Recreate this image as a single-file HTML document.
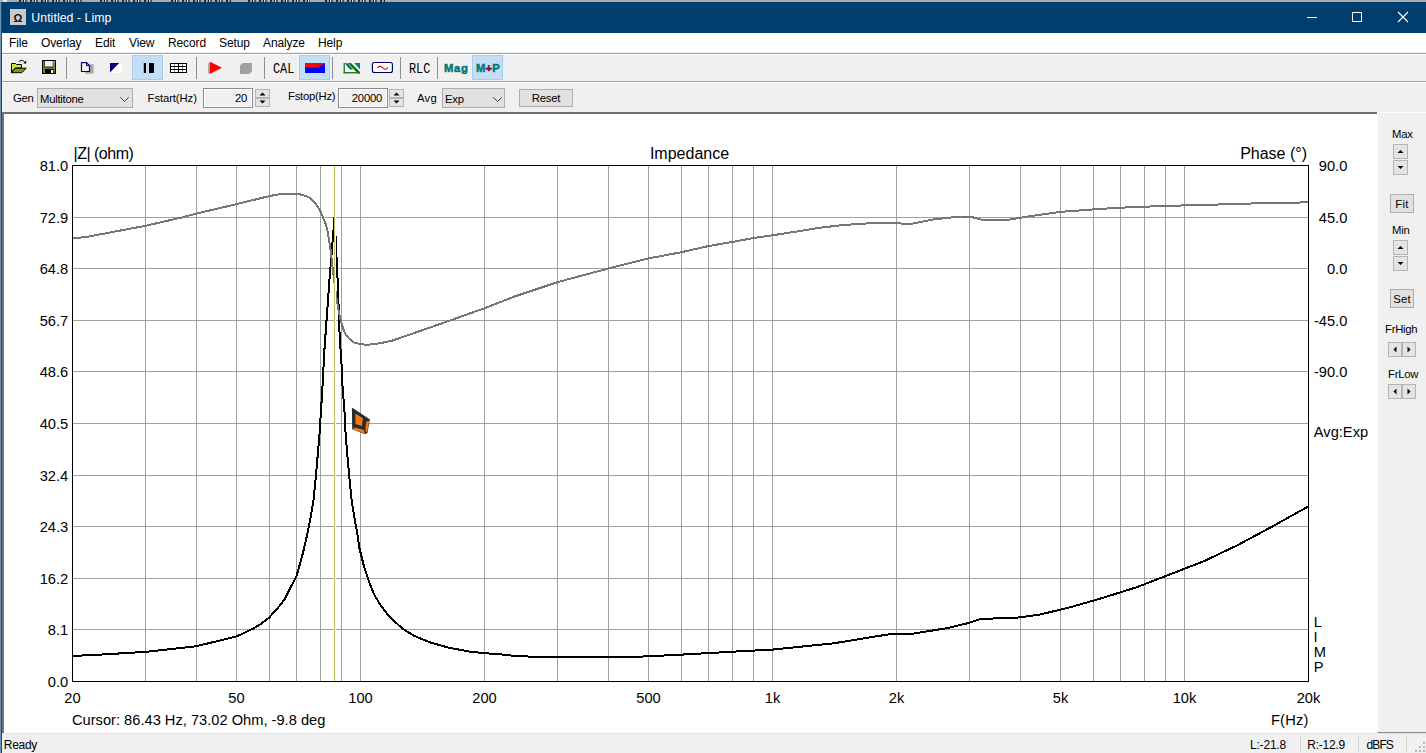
<!DOCTYPE html>
<html lang="en">
<head>
<meta charset="utf-8">
<title>Untitled - Limp</title>
<style>
html,body{margin:0;padding:0;}
body{width:1426px;height:753px;overflow:hidden;background:#fff;position:relative;font-family:"Liberation Sans",Arial,sans-serif;font-size:12px;color:#000;}
.abs{position:absolute;}
#topstrip{left:0;top:0;width:1426px;height:2px;background:#ababab;overflow:hidden;}
#topstrip i{position:absolute;top:0;height:2px;background:repeating-linear-gradient(90deg,#2a2a2a 0,#2a2a2a 2px,#9a9a9a 2px,#9a9a9a 4px,#1e1e1e 4px,#1e1e1e 5px,#dcdcdc 5px,#dcdcdc 6px,#555 6px,#555 8px,#ababab 8px,#ababab 11px);}
#titlebar{left:0;top:2px;width:1426px;height:31px;background:#003e70;}
#lborder{left:0;top:2px;width:2px;height:751px;background:#27466b;}
#lborder2{left:0;top:2px;width:1px;height:751px;background:#6f93b4;}
#appicon{left:10px;top:9px;width:16px;height:16px;background:#cbcbcb;color:#111;font-size:11px;line-height:18px;text-align:center;font-weight:bold;}
#title{left:31.3px;top:10px;color:#fff;font-size:12.3px;line-height:16px;white-space:nowrap;letter-spacing:0.06px;}
#menubar{left:2px;top:33px;width:1424px;height:20px;background:#fff;border-bottom:1px solid #f0f0f0;box-sizing:border-box;}
#menubar span{position:absolute;top:3px;font-size:12px;line-height:15px;white-space:nowrap;letter-spacing:-0.12px;}
#tb1{left:2px;top:53px;width:1424px;height:29px;background:#f0f0f0;border-top:1px solid #a0a0a0;box-sizing:border-box;}
#tb2{left:2px;top:81px;width:1424px;height:32px;background:#f0f0f0;border-top:1px solid #a0a0a0;box-sizing:border-box;}
#tb2:before,#tb1:before{content:"";position:absolute;left:0;top:0;width:100%;height:1px;background:#fff;}
.sep{position:absolute;top:57px;width:1px;height:22px;background:#8d8d8d;}
.hl{position:absolute;top:55px;width:31px;height:25px;background:#c4dff5;border:1px solid #a6cdee;box-sizing:border-box;}
.pix{position:absolute;font-family:"Liberation Mono","DejaVu Sans Mono",monospace;font-size:15px;line-height:16px;color:#000;white-space:nowrap;transform:scaleX(0.79);transform-origin:0 0;}
.tealb{position:absolute;font-weight:bold;color:#007878;font-size:11.3px;line-height:14px;white-space:nowrap;letter-spacing:0.1px;-webkit-text-stroke:0.5px #007878;}
.lbl{position:absolute;font-size:11.3px;line-height:14px;white-space:nowrap;letter-spacing:-0.25px;}
.combo{position:absolute;top:88px;height:20px;background:#e1e1e1;border:1px solid #adadad;box-sizing:border-box;font-size:11.3px;line-height:20px;padding-left:2px;letter-spacing:-0.25px;}
.edit{position:absolute;top:88px;height:20px;background:#f0f0f0;border:1px solid #8c8c8c;box-shadow:inset 1px 1px 0 #fff, inset -1px -1px 0 #fff;box-sizing:border-box;font-size:11.3px;line-height:19px;text-align:right;padding-right:5px;letter-spacing:-0.25px;}
.spin{position:absolute;top:89px;width:15px;height:18px;}
.spin b{position:absolute;left:0;width:15px;height:9px;background:#e4e4e4;border:1px solid #b4b4b4;box-sizing:border-box;}
.btn{position:absolute;background:#e1e1e1;border:1px solid #adadad;box-sizing:border-box;font-size:11.3px;text-align:center;letter-spacing:-0.25px;}
#chartbox{left:2px;top:112px;width:1375px;height:621px;background:#fff;border-left:2px solid #757575;border-top:2px solid #707070;box-sizing:border-box;}
#rpanel{left:1377px;top:112px;width:49px;height:621px;background:#f0f0f0;border-top:1px solid #fff;border-left:1px solid #fff;border-bottom:1px solid #8c8c8c;box-sizing:border-box;}
#status{left:2px;top:733px;width:1424px;height:20px;background:#f0f0f0;border-top:1px solid #e2e2e2;box-sizing:border-box;}
#status span{position:absolute;top:4px;font-size:12px;line-height:14px;white-space:nowrap;letter-spacing:-0.2px;}
#status i{position:absolute;top:3px;width:1px;height:15px;background:#d0d0d0;}
svg.plot{position:absolute;left:0;top:0;}
svg.ic{position:absolute;overflow:visible;}

.vspin,.hspin{position:absolute;}
.vspin{width:15px;height:31px;}
.hspin{width:28px;height:15px;}
.vspin b,.hspin b{position:absolute;background:#e4e4e4;border:1px solid #b4b4b4;box-sizing:border-box;}
</style>
</head>
<body>
<div id="topstrip" class="abs"><i style="left:3px;width:4px;background:#e8e8e8"></i><i style="left:19px;width:63px"></i><i style="left:100px;width:53px"></i><i style="left:171px;width:60px"></i><i style="left:248px;width:62px"></i><i style="left:325px;width:60px"></i></div>
<div id="titlebar" class="abs"></div>
<div id="appicon" class="abs">Ω</div>
<div id="title" class="abs">Untitled - Limp</div>
<svg class="ic" style="left:1300px;top:8px" width="120" height="20" viewBox="0 0 120 20"><g stroke="#fff" stroke-width="1" fill="none"><line x1="7" y1="9.5" x2="17" y2="9.5"/><rect x="52.5" y="4.5" width="9" height="9"/><path d="M98 4 L108 14 M108 4 L98 14" stroke-width="1.1"/></g></svg>
<div id="menubar" class="abs"><span style="left:7px">File</span><span style="left:39px">Overlay</span><span style="left:93px">Edit</span><span style="left:127px">View</span><span style="left:166px">Record</span><span style="left:217px">Setup</span><span style="left:261px">Analyze</span><span style="left:316px">Help</span></div>
<div id="tb1" class="abs"></div>
<div id="tb2" class="abs"></div>
<div class="sep" style="left:66px"></div><div class="sep" style="left:196px"></div><div class="sep" style="left:264px"></div><div class="sep" style="left:332px"></div><div class="sep" style="left:400px"></div><div class="sep" style="left:437px"></div>
<div class="hl" style="left:132px"></div><div class="hl" style="left:299px"></div><div class="hl" style="left:472px"></div>
<!-- open -->
<svg class="ic" style="left:10px;top:58px" width="18" height="17" viewBox="10 58 18 17">
<polygon points="11.5,63.5 15.5,63.5 16.5,64.5 21.5,64.5 21.5,68 15.2,68 11.5,72.3" fill="#c4ec38" stroke="#000" stroke-width="1"/>
<polygon points="15.2,68.2 26.2,68.2 21.8,72.7 11.3,72.7" fill="#90901a" stroke="#000" stroke-width="1"/>
<path d="M18.8 61.8 Q21.8 58.6 25 62.6" fill="none" stroke="#000" stroke-width="1"/>
<polygon points="23.4,63.6 26.2,63.6 26.2,60.6" fill="#000"/>
</svg>
<!-- save -->
<svg class="ic" style="left:41px;top:59px" width="16" height="16" viewBox="41 59 16 16">
<rect x="42.5" y="60.5" width="13" height="13" fill="#7e7e28" stroke="#000" stroke-width="1"/>
<rect x="44.6" y="61" width="8.4" height="6.4" fill="#000"/><rect x="45" y="61" width="7.8" height="5.6" fill="#eeeeee"/>
<rect x="45" y="69" width="8.6" height="4" fill="#000"/>
<rect x="51" y="70" width="2" height="3" fill="#fff"/>
<rect x="54" y="61.5" width="1" height="1" fill="#e8e8e8"/>
</svg>
<!-- copy -->
<svg class="ic" style="left:80px;top:61px" width="15" height="14" viewBox="80 61 15 14">
<rect x="85.2" y="64.3" width="8.4" height="9.4" fill="#a8a8a8"/>
<polygon points="81.5,62.7 86.5,62.7 89.5,65.7 89.5,71.5 81.5,71.5" fill="#f4f4f4" stroke="#000080" stroke-width="1.2"/>
<path d="M86.5 62.7 V65.7 H89.5" fill="none" stroke="#000080" stroke-width="1"/>
</svg>
<!-- bw -->
<svg class="ic" style="left:109px;top:62px" width="14" height="12" viewBox="109 62 14 12">
<rect x="110" y="63" width="12" height="9.8" fill="#fff"/>
<polygon points="110,63 119.2,63 110,72.4" fill="#000080"/>
</svg>
<!-- pause -->
<svg class="ic" style="left:143px;top:62px" width="12" height="12" viewBox="143 62 12 12">
<rect x="143.8" y="63" width="2.2" height="10" fill="#000"/><rect x="149" y="63" width="5" height="10" fill="#000"/>
</svg>
<!-- table -->
<svg class="ic" style="left:169px;top:62px" width="19" height="12" viewBox="169 62 19 12">
<rect x="170" y="63" width="17" height="10" fill="#fff"/>
<g stroke="#000" stroke-width="1" shape-rendering="crispEdges"><rect x="170.5" y="63.5" width="16" height="9" fill="none"/><line x1="170" y1="66.5" x2="187" y2="66.5"/><line x1="170" y1="69.5" x2="187" y2="69.5"/><line x1="178.5" y1="63" x2="178.5" y2="73"/></g>
<g stroke="#909090" stroke-width="1" shape-rendering="crispEdges"><line x1="174.5" y1="64" x2="174.5" y2="72" stroke-dasharray="2 1"/><line x1="182.5" y1="64" x2="182.5" y2="72" stroke-dasharray="2 1"/></g>
</svg>
<!-- play -->
<svg class="ic" style="left:207px;top:61px" width="16" height="14" viewBox="207 61 16 14">
<polygon points="208.2,63.5 210.5,62 210.5,73.8 208.2,73.8" fill="#a0a0a0"/>
<polygon points="210,61.8 222,67.8 210,73.8" fill="#ff0000"/>
</svg>
<!-- stop -->
<svg class="ic" style="left:239px;top:62px" width="14" height="13" viewBox="239 62 14 13">
<polygon points="242.6,63 251.9,63 251.9,71.2 249.2,73.9 240,73.9 240,65.6" fill="#a0a0a0"/>
</svg>
<!-- red/blue -->
<svg class="ic" style="left:304px;top:62px" width="22" height="12" viewBox="304 62 22 12">
<rect x="305" y="63" width="20" height="10" fill="#0000ff"/>
<polygon points="305,63 325,63 325,63.4 316.6,67.6 305,67.6" fill="#ff0000"/>
</svg>
<!-- green stripes -->
<svg class="ic" style="left:343px;top:62px" width="18" height="12" viewBox="343 62 18 12">
<rect x="344" y="63" width="15.5" height="9.6" fill="#fff"/>
<polygon points="354.2,63 360,63 360,69.6" fill="#008080"/>
<polygon points="344.8,63.2 347.6,63.2 353,69.4 350,69.4" fill="#006868"/>
<polygon points="347.8,63 351,63 360,72 360,73.4 357.6,73.4" fill="#008000"/>
<rect x="343.6" y="63" width="1.3" height="10.4" fill="#1a7a1a"/>
<rect x="343.6" y="72" width="16.4" height="1.4" fill="#1a7a1a"/>
</svg>
<!-- sine box -->
<svg class="ic" style="left:371px;top:61px" width="23" height="13" viewBox="371 61 23 13">
<rect x="372.4" y="62.5" width="20" height="10" rx="2" fill="#fff" stroke="#000064" stroke-width="1.15"/>
<path d="M377.5 68 Q378.6 65.9 380.6 66.6 Q382.2 67.3 383.4 68.4 Q385 69.7 386.6 69 Q387.5 68.5 387.6 67.3" fill="none" stroke="#d00000" stroke-width="1.1"/>
</svg>
<div class="pix" style="left:273px;top:62px;">CAL</div>
<div class="pix" style="left:409px;top:62px;">RLC</div>
<div class="tealb" style="left:444px;top:61px;letter-spacing:0.7px">Mag</div>
<div class="tealb" style="left:476px;top:61px">M<span style="color:#8a0030;-webkit-text-stroke-color:#8a0030">+</span>P</div>
<div class="lbl" style="left:13px;top:91px">Gen</div>
<div class="combo" style="left:37px;width:96px">Multitone<svg class="ic" style="left:82px;top:7.5px" width="9" height="6" viewBox="0 0 9 6"><path d="M0.3 0.3 L4.5 4.5 L8.7 0.3" fill="none" stroke="#444" stroke-width="1"/></svg></div>
<div class="lbl" style="left:147.6px;top:91px;letter-spacing:-0.1px">Fstart(Hz)</div>
<div class="edit" style="left:203px;width:50px">20</div>
<div class="spin" style="left:255px"><b style="top:0"></b><b style="top:9px"></b><svg class="ic" style="left:0;top:0" width="15" height="18" viewBox="0 0 15 18"><polygon points="4.5,6.5 10.5,6.5 7.5,3.5" fill="#000"/><polygon points="4.5,11.5 10.5,11.5 7.5,14.5" fill="#000"/></svg></div>
<div class="lbl" style="left:288px;top:89px">Fstop(Hz)</div>
<div class="edit" style="left:338px;width:50px">20000</div>
<div class="spin" style="left:389px"><b style="top:0"></b><b style="top:9px"></b><svg class="ic" style="left:0;top:0" width="15" height="18" viewBox="0 0 15 18"><polygon points="4.5,6.5 10.5,6.5 7.5,3.5" fill="#000"/><polygon points="4.5,11.5 10.5,11.5 7.5,14.5" fill="#000"/></svg></div>
<div class="lbl" style="left:417px;top:91px;letter-spacing:0.2px">Avg</div>
<div class="combo" style="left:442px;width:63px">Exp<svg class="ic" style="left:49.5px;top:7.5px" width="9" height="6" viewBox="0 0 9 6"><path d="M0.3 0.3 L4.5 4.5 L8.7 0.3" fill="none" stroke="#444" stroke-width="1"/></svg></div>
<div class="btn" style="left:519px;top:89px;width:54px;height:18px;line-height:16px">Reset</div>
<div id="chartbox" class="abs"></div>
<div id="rpanel" class="abs"></div>
<div class="lbl" style="left:1392px;top:127px">Max</div>
<div class="vspin" style="left:1393px;top:144px"><b style="left:0;top:0;width:15px;height:15px"></b><b style="left:0;top:16px;width:15px;height:15px"></b><svg class="ic" style="left:0;top:0" width="15" height="31" viewBox="0 0 15 31"><polygon points="4.5,9 10.5,9 7.5,6" fill="#000"/><polygon points="4.5,22 10.5,22 7.5,25" fill="#000"/></svg></div>
<div class="btn" style="left:1390px;top:194px;width:24px;height:19px;line-height:19px;letter-spacing:0.4px">Fit</div>
<div class="lbl" style="left:1392px;top:223px">Min</div>
<div class="vspin" style="left:1393px;top:240px"><b style="left:0;top:0;width:15px;height:15px"></b><b style="left:0;top:16px;width:15px;height:15px"></b><svg class="ic" style="left:0;top:0" width="15" height="31" viewBox="0 0 15 31"><polygon points="4.5,9 10.5,9 7.5,6" fill="#000"/><polygon points="4.5,22 10.5,22 7.5,25" fill="#000"/></svg></div>
<div class="btn" style="left:1390px;top:289px;width:24px;height:19px;line-height:19px;letter-spacing:0.1px">Set</div>
<div class="lbl" style="left:1385px;top:322px">FrHigh</div>
<div class="hspin" style="left:1388px;top:342px"><b style="left:0;top:0;width:14px;height:15px"></b><b style="left:14px;top:0;width:14px;height:15px"></b><svg class="ic" style="left:0;top:0" width="28" height="15" viewBox="0 0 28 15"><polygon points="8.5,4.5 8.5,10.5 5.5,7.5" fill="#000"/><polygon points="19.5,4.5 19.5,10.5 22.5,7.5" fill="#000"/></svg></div>
<div class="lbl" style="left:1388px;top:367px">FrLow</div>
<div class="hspin" style="left:1388px;top:384px"><b style="left:0;top:0;width:14px;height:15px"></b><b style="left:14px;top:0;width:14px;height:15px"></b><svg class="ic" style="left:0;top:0" width="28" height="15" viewBox="0 0 28 15"><polygon points="8.5,4.5 8.5,10.5 5.5,7.5" fill="#000"/><polygon points="19.5,4.5 19.5,10.5 22.5,7.5" fill="#000"/></svg></div>
<div id="status" class="abs"><span style="left:1.8px;letter-spacing:-0.3px">Ready</span><span style="left:1248px">L:-21.8</span><i style="left:1298px"></i><span style="left:1305.3px;letter-spacing:-0.25px">R:-12.9</span><i style="left:1356px"></i><span style="left:1364.5px;letter-spacing:-0.9px">dBFS</span><i style="left:1404px"></i>
<svg class="ic" style="left:1413px;top:8px" width="12" height="12" viewBox="0 0 12 12"><g fill="#b8b8b8"><rect x="8" y="0" width="2" height="2"/><rect x="4" y="4" width="2" height="2"/><rect x="8" y="4" width="2" height="2"/><rect x="0" y="8" width="2" height="2"/><rect x="4" y="8" width="2" height="2"/><rect x="8" y="8" width="2" height="2"/></g></svg></div>
<div id="lborder" class="abs"></div><div id="lborder2" class="abs"></div>
<svg class="plot" width="1426" height="753" viewBox="0 0 1426 753">
<g stroke="#a0a0a0" stroke-width="1" shape-rendering="crispEdges"><line x1="145.5" y1="165" x2="145.5" y2="681"/><line x1="196.5" y1="165" x2="196.5" y2="681"/><line x1="236.5" y1="165" x2="236.5" y2="681"/><line x1="269.5" y1="165" x2="269.5" y2="681"/><line x1="296.5" y1="165" x2="296.5" y2="681"/><line x1="320.5" y1="165" x2="320.5" y2="681"/><line x1="341.5" y1="165" x2="341.5" y2="681"/><line x1="360.5" y1="165" x2="360.5" y2="681"/><line x1="484.5" y1="165" x2="484.5" y2="681"/><line x1="557.5" y1="165" x2="557.5" y2="681"/><line x1="608.5" y1="165" x2="608.5" y2="681"/><line x1="648.5" y1="165" x2="648.5" y2="681"/><line x1="681.5" y1="165" x2="681.5" y2="681"/><line x1="708.5" y1="165" x2="708.5" y2="681"/><line x1="732.5" y1="165" x2="732.5" y2="681"/><line x1="753.5" y1="165" x2="753.5" y2="681"/><line x1="772.5" y1="165" x2="772.5" y2="681"/><line x1="896.5" y1="165" x2="896.5" y2="681"/><line x1="969.5" y1="165" x2="969.5" y2="681"/><line x1="1020.5" y1="165" x2="1020.5" y2="681"/><line x1="1060.5" y1="165" x2="1060.5" y2="681"/><line x1="1093.5" y1="165" x2="1093.5" y2="681"/><line x1="1120.5" y1="165" x2="1120.5" y2="681"/><line x1="1144.5" y1="165" x2="1144.5" y2="681"/><line x1="1165.5" y1="165" x2="1165.5" y2="681"/><line x1="1184.5" y1="165" x2="1184.5" y2="681"/><line x1="72" y1="217.5" x2="1308" y2="217.5"/><line x1="72" y1="268.5" x2="1308" y2="268.5"/><line x1="72" y1="320.5" x2="1308" y2="320.5"/><line x1="72" y1="371.5" x2="1308" y2="371.5"/><line x1="72" y1="423.5" x2="1308" y2="423.5"/><line x1="72" y1="475.5" x2="1308" y2="475.5"/><line x1="72" y1="526.5" x2="1308" y2="526.5"/><line x1="72" y1="578.5" x2="1308" y2="578.5"/><line x1="72" y1="629.5" x2="1308" y2="629.5"/></g>
<polyline fill="none" stroke="#000" stroke-width="2" stroke-linejoin="round" shape-rendering="crispEdges" points="72.5,655.9 96.0,654.9 146.0,651.8 196.0,646.3 237.0,636.3 253.6,628.4 260.0,624.5 269.2,617.6 280.3,605.0 284.7,599.2 293.9,581.0 296.7,575.5 302.9,553.2 306.0,540.0 309.8,522.0 313.5,500.0 315.9,476.3 319.4,435.6 322.3,390.0 324.4,350.0 329.1,284.6 334.6,216.1 337.8,284.6 339.8,340.0 341.3,359.0 342.6,387.8 344.4,410.0 345.7,435.6 348.0,462.9 349.3,476.3 351.6,500.0 354.8,520.0 356.7,530.0 359.5,548.6 364.2,567.2 368.8,581.1 374.4,595.0 380.0,604.3 388.3,615.5 402.3,628.5 414.3,635.9 429.2,642.1 447.8,647.5 470.1,651.7 485.0,653.2 500.0,654.3 513.9,655.8 536.4,656.9 557.4,657.2 607.9,657.2 641.5,656.6 676.6,654.9 710.3,653.0 740.0,651.3 772.6,649.6 833.6,643.3 888.3,634.4 913.5,633.6 947.2,628.1 968.2,623.1 980.9,618.8 1014.5,618.0 1039.8,614.6 1069.2,607.5 1098.7,599.1 1136.5,587.3 1166.0,575.9 1203.9,561.2 1237.5,545.2 1271.2,527.1 1308.2,506.5"/>
<polyline fill="none" stroke="#767676" stroke-width="2" stroke-linejoin="round" shape-rendering="crispEdges" points="72.7,238.6 88.7,236.5 145.0,225.9 182.2,217.4 196.0,213.7 236.3,204.2 269.3,196.1 283.0,193.6 295.8,193.6 303.0,195.0 308.6,197.2 315.0,202.5 320.3,211.0 325.6,223.7 327.3,230.0 330.6,250.0 332.7,268.5 335.3,289.7 337.9,307.0 340.6,320.0 343.2,329.0 345.6,334.2 349.0,338.5 354.0,342.5 361.0,344.3 368.0,344.8 380.0,343.3 392.6,340.5 417.1,332.0 452.2,319.7 483.8,308.5 515.3,296.2 557.4,282.2 608.2,268.5 648.6,258.4 681.9,252.1 708.2,246.1 732.7,241.9 753.7,238.0 773.0,235.2 806.3,230.0 820.0,227.7 844.5,224.9 872.6,223.1 895.4,223.1 909.4,224.2 932.2,219.6 960.3,216.5 970.8,216.8 983.0,220.0 1009.3,219.6 1030.4,216.1 1060.2,211.9 1093.5,209.4 1119.8,207.7 1165.4,205.9 1205.7,204.9 1240.8,203.8 1275.8,202.8 1308.5,202.4"/>
<line x1="335.5" y1="166" x2="335.5" y2="681" stroke="#ffffc8" stroke-width="1" shape-rendering="crispEdges"/>
<line x1="334.5" y1="166" x2="334.5" y2="681" stroke="#c2c25a" stroke-width="1" shape-rendering="crispEdges"/>
<rect x="72.5" y="165.5" width="1236" height="516" fill="none" stroke="#000" stroke-width="1" shape-rendering="crispEdges"/>
<g class="mk"><polygon points="351.9,407.6 370,419.4 367.3,433.3 364.8,434 352.2,429.3" fill="#2b2b2b"/>
<polygon points="355.3,413.6 362.9,418.2 361.9,426 355.5,424" fill="#f07818"/>
<polygon points="354.6,427.6 363.9,430 365,433.6 352.8,429.4" fill="#f07818"/>
<polygon points="366.3,421.4 369.3,420.4 367,432.6 365.4,430.2" fill="#f07818"/></g>
<g font-family="'Liberation Sans',Arial,sans-serif" font-size="14.67px" fill="#000"><text x="68.2" y="170.9" text-anchor="end">81.0</text><text x="68.2" y="222.5" text-anchor="end">72.9</text><text x="68.2" y="274.1" text-anchor="end">64.8</text><text x="68.2" y="325.7" text-anchor="end">56.7</text><text x="68.2" y="377.3" text-anchor="end">48.6</text><text x="68.2" y="428.9" text-anchor="end">40.5</text><text x="68.2" y="480.5" text-anchor="end">32.4</text><text x="68.2" y="532.1" text-anchor="end">24.3</text><text x="68.2" y="583.7" text-anchor="end">16.2</text><text x="68.2" y="635.3" text-anchor="end">8.1</text><text x="68.2" y="686.9" text-anchor="end">0.0</text><text x="1347.3" y="170.9" text-anchor="end">90.0</text><text x="1347.3" y="222.5" text-anchor="end">45.0</text><text x="1347.3" y="274.1" text-anchor="end">0.0</text><text x="1347.3" y="325.7" text-anchor="end">-45.0</text><text x="1347.3" y="377.3" text-anchor="end">-90.0</text><text x="72.5" y="703" text-anchor="middle">20</text><text x="236.5" y="703" text-anchor="middle">50</text><text x="360.5" y="703" text-anchor="middle">100</text><text x="484.5" y="703" text-anchor="middle">200</text><text x="648.5" y="703" text-anchor="middle">500</text><text x="772.5" y="703" text-anchor="middle">1k</text><text x="896.5" y="703" text-anchor="middle">2k</text><text x="1060.5" y="703" text-anchor="middle">5k</text><text x="1184.5" y="703" text-anchor="middle">10k</text><text x="1308.5" y="703" text-anchor="middle">20k</text>
<text x="72" y="725">Cursor: 86.43 Hz, 73.02 Ohm, -9.8 deg</text>
<text x="1308.6" y="724.8" text-anchor="end" letter-spacing="0.2">F(Hz)</text>
<text x="1313.8" y="436.6">Avg:Exp</text>
<text x="1313.8" y="626.7">L</text><text x="1313.6" y="641.6">I</text><text x="1313.7" y="656.6">M</text><text x="1313.8" y="671.6">P</text>
</g>
<g font-family="'Liberation Sans',Arial,sans-serif" font-size="16px" fill="#000">
<text x="73.5" y="159" letter-spacing="-0.5">|Z| (ohm)</text>
<text x="689.5" y="159" text-anchor="middle">Impedance</text>
<text x="1307" y="159" text-anchor="end">Phase (°)</text>
</g>
</svg>
</body>
</html>
